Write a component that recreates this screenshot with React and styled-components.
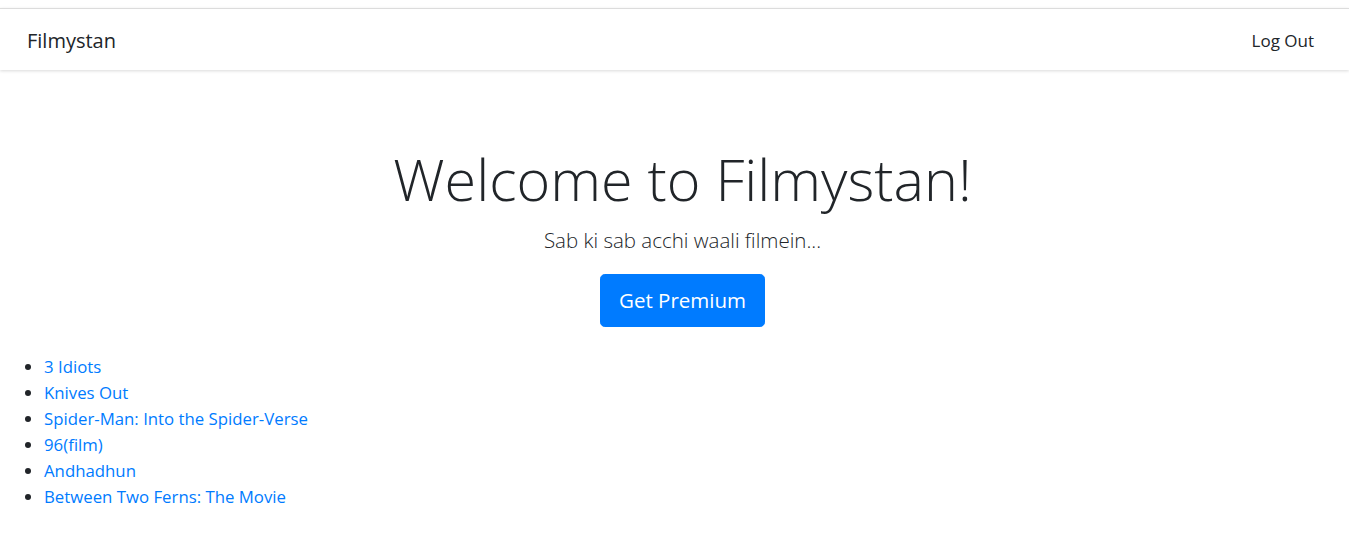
import React from 'react'
import styled, { createGlobalStyle } from 'styled-components'

const GlobalStyle = createGlobalStyle`
  body {
    margin: 0;
    background: #fff;
    color: #212529;
    font-family: "Open Sans", "Noto Sans", sans-serif;
  }
`

const movies = [
  '3 Idiots',
  'Knives Out',
  'Spider-Man: Into the Spider-Verse',
  '96(film)',
  'Andhadhun',
  'Between Two Ferns: The Movie',
]

function App() {
  return (
    <Page>
      <GlobalStyle />
      <Navbar>
        <Brand>Filmystan</Brand>
        <NavLink>Log Out</NavLink>
      </Navbar>

      <Hero>
        <Title>Welcome to Filmystan!</Title>
        <Lead>Sab ki sab acchi waali filmein...</Lead>
        <Button>Get Premium</Button>
      </Hero>

      <MovieList>
        {movies.map((m) => (
          <li key={m}><MovieLink href="#">{m}</MovieLink></li>
        ))}
      </MovieList>
    </Page>
  )
}

export default App


const Page = styled.div`
  padding-top: 8px;
`

const Navbar = styled.nav`
  display: flex;
  align-items: center;
  justify-content: space-between;
  height: 61px;
  padding: 0 35px 0 27px;
  border-top: 1px solid #dcdcdc;
  box-shadow: 0 1px 3px rgba(0, 0, 0, 0.15);
`

const Brand = styled.span`
  font-size: 20px;
  color: #212529;
  margin-top: 2px;
`

const NavLink = styled.span`
  font-size: 17px;
  color: #212529;
  margin-top: 2px;
`

const Hero = styled.section`
  display: flex;
  flex-direction: column;
  align-items: center;
  padding: 75px 0 0 16px;
`

const Title = styled.h1`
  margin: 0;
  font-size: 57.5px;
  font-weight: 300;
  line-height: 1.2;
`

const Lead = styled.p`
  margin: 11px 0 18px;
  font-size: 20.5px;
  font-weight: 300;
  line-height: 1.5;
`

const Button = styled.button`
  font-family: inherit;
  font-size: 20.5px;
  line-height: 1.5;
  padding: 10px 18px;
  color: #fff;
  background: #007bff;
  border: 1px solid #007bff;
  border-radius: 4.8px;
`

const MovieList = styled.ul`
  margin: 27px 0 0;
  padding-left: 44px;
  font-size: 16.8px;
  line-height: 26px;
`

const MovieLink = styled.a`
  color: #007bff;
  text-decoration: none;
`
